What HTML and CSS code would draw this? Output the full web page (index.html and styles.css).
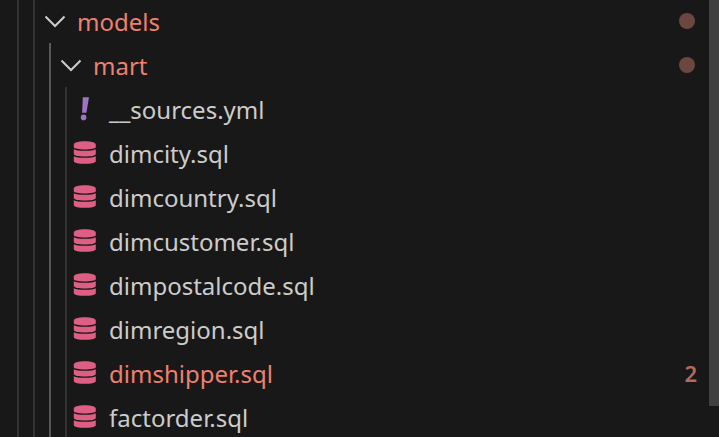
FILE: index.html
```html
<!DOCTYPE html>
<html lang="en">
<head>
  <meta charset="UTF-8">
  <meta name="viewport" content="width=device-width, initial-scale=1.0">
  <title>Explorer</title>
  <link rel="stylesheet" href="styles.css">
</head>
<body>
  <svg class="symbols" aria-hidden="true">
    <symbol id="chevron" viewBox="0 0 24 24">
      <path d="M4.500 7.500 14 17l9.500-9.500" fill="none" stroke="currentColor" stroke-width="2" />
    </symbol>
    <symbol id="database" viewBox="0 0 24 24">
      <path d="M0.800 3.500C0.800 1.600 5.500 0.300 11.800 0.300s11 1.300 11 3.200v2.800c0 1.300-5 2.200-11 2.200s-11-.9-11-2.200z" />
      <path d="M0.800 8.200c2 1.200 6 1.600 11 1.600s9-.4 11-1.600v4.800c0 1.700-5 2.500-11 2.500s-11-.8-11-2.500z" />
      <path d="M0.800 15.200c2 1.200 6 1.600 11 1.600s9-.4 11-1.600v5c0 1.700-5 2.600-11 2.600s-11-.9-11-2.600z" />
    </symbol>
    <symbol id="yaml" viewBox="0 0 24 24">
      <path d="M9.800 0.200h6.200l-2.600 15.600h-4.300z" />
      <circle cx="10.600" cy="20.400" r="2.800" />
    </symbol>
  </svg>

  <div class="explorer">
    <ul class="tree">
      <li>
        <ul class="tree">
          <li>
            <button class="row error" aria-expanded="true">
              <svg class="icon chevron"><use href="#chevron" /></svg>
              <span class="name">models</span>
              <span class="dot"></span>
            </button>
            <ul class="tree active">
              <li>
                <button class="row error" aria-expanded="true">
                  <svg class="icon chevron"><use href="#chevron" /></svg>
                  <span class="name">mart</span>
                  <span class="dot"></span>
                </button>
                <ul class="tree">
                  <li>
                    <button class="row">
                      <svg class="icon yaml"><use href="#yaml" /></svg>
                      <span class="name">__sources.yml</span>
                    </button>
                  </li>
                  <li>
                    <button class="row">
                      <svg class="icon database"><use href="#database" /></svg>
                      <span class="name">dimcity.sql</span>
                    </button>
                  </li>
                  <li>
                    <button class="row">
                      <svg class="icon database"><use href="#database" /></svg>
                      <span class="name">dimcountry.sql</span>
                    </button>
                  </li>
                  <li>
                    <button class="row">
                      <svg class="icon database"><use href="#database" /></svg>
                      <span class="name">dimcustomer.sql</span>
                    </button>
                  </li>
                  <li>
                    <button class="row">
                      <svg class="icon database"><use href="#database" /></svg>
                      <span class="name">dimpostalcode.sql</span>
                    </button>
                  </li>
                  <li>
                    <button class="row">
                      <svg class="icon database"><use href="#database" /></svg>
                      <span class="name">dimregion.sql</span>
                    </button>
                  </li>
                  <li>
                    <button class="row error">
                      <svg class="icon database"><use href="#database" /></svg>
                      <span class="name">dimshipper.sql</span>
                      <span class="count">2</span>
                    </button>
                  </li>
                  <li>
                    <button class="row">
                      <svg class="icon database"><use href="#database" /></svg>
                      <span class="name">factorder.sql</span>
                    </button>
                  </li>
                </ul>
              </li>
            </ul>
          </li>
        </ul>
      </li>
    </ul>
    <div class="scrollbar">
      <div class="thumb"></div>
    </div>
  </div>
</body>
</html>
```

FILE: styles.css
```css
* {
  box-sizing: border-box;
  margin: 0;
  padding: 0;
}

body {
  background-color: #181818;
  color: #cccccc;
  font-family: "Noto Sans", "Open Sans", sans-serif;
  font-size: 24px;
}

.symbols {
  display: none;
}

.explorer {
  display: flex;
  height: 100vh;
  overflow: hidden;

  & > .tree {
    flex: 1;
    align-self: flex-start;
    margin-top: -1px;
    margin-left: 17px;
  }

  & > .scrollbar {
    width: 10px;

    & > .thumb {
      height: 93%;
      background-color: #404040;
    }
  }
}

.tree {
  list-style: none;
  margin-left: 14px;
  border-left: 2px solid #333333;

  &.active {
    border-color: #585858;
  }
}

.row {
  display: flex;
  align-items: center;
  gap: 12px;
  width: 100%;
  height: 44px;
  padding: 0 12px 0 6px;
  border: none;
  background: none;
  color: inherit;
  font: inherit;
  text-align: left;
  cursor: pointer;

  & > .icon {
    flex: none;
    width: 24px;
    height: 24px;
    fill: currentColor;
  }

  & > .chevron {
    color: #cccccc;
  }

  & > .database {
    color: #dd5f86;
  }

  & > .yaml {
    color: #a074c4;
  }

  & > .name {
    flex: 1;
    padding-top: 2px;
    line-height: 32px;
  }

  & > .dot {
    width: 16px;
    height: 16px;
    margin-right: 2px;
    border-radius: 50%;
    background-color: #6c473f;
  }

  & > .count {
    color: #b5685c;
    font-size: 22px;
    font-weight: 600;
  }

  &.error > .name {
    color: #ee8070;
  }
}
```
